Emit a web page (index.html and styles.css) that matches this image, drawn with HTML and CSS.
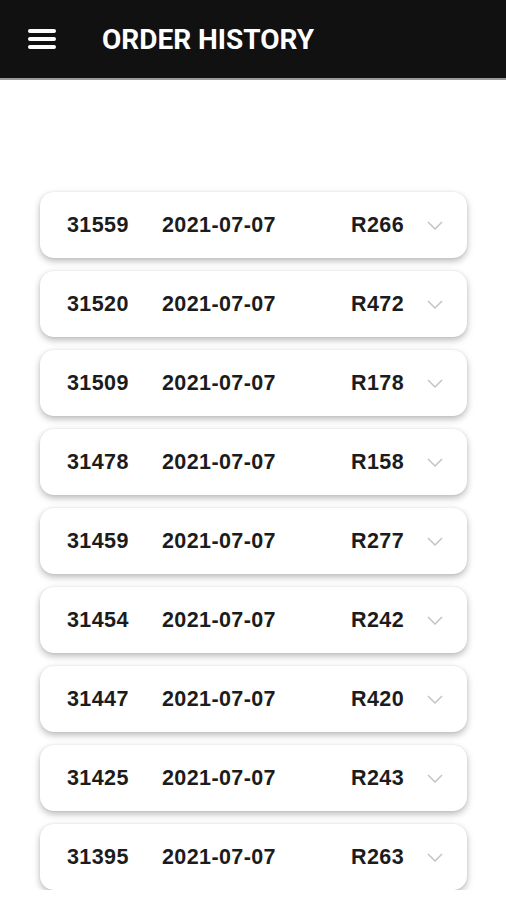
FILE: index.html
```html
<!DOCTYPE html>
<html lang="en">
<head>
<meta charset="utf-8">
<title>Order History</title>
<link rel="stylesheet" href="styles.css">
</head>
<body>
<header class="topbar">
  <svg class="menu-icon" width="28" height="22" viewBox="0 0 28 22" aria-hidden="true">
    <line x1="2" y1="3" x2="26" y2="3"/>
    <line x1="2" y1="11" x2="26" y2="11"/>
    <line x1="2" y1="19" x2="26" y2="19"/>
  </svg>
  <h1 class="title">ORDER HISTORY</h1>
</header>
<main class="orders">
  <div class="order"><span class="num">31559</span><span class="date">2021-07-07</span><span class="price">R266</span><svg class="chev" width="16" height="9" viewBox="0 0 16 9"><polyline points="1,1 8,8 15,1"/></svg></div>
  <div class="order"><span class="num">31520</span><span class="date">2021-07-07</span><span class="price">R472</span><svg class="chev" width="16" height="9" viewBox="0 0 16 9"><polyline points="1,1 8,8 15,1"/></svg></div>
  <div class="order"><span class="num">31509</span><span class="date">2021-07-07</span><span class="price">R178</span><svg class="chev" width="16" height="9" viewBox="0 0 16 9"><polyline points="1,1 8,8 15,1"/></svg></div>
  <div class="order"><span class="num">31478</span><span class="date">2021-07-07</span><span class="price">R158</span><svg class="chev" width="16" height="9" viewBox="0 0 16 9"><polyline points="1,1 8,8 15,1"/></svg></div>
  <div class="order"><span class="num">31459</span><span class="date">2021-07-07</span><span class="price">R277</span><svg class="chev" width="16" height="9" viewBox="0 0 16 9"><polyline points="1,1 8,8 15,1"/></svg></div>
  <div class="order"><span class="num">31454</span><span class="date">2021-07-07</span><span class="price">R242</span><svg class="chev" width="16" height="9" viewBox="0 0 16 9"><polyline points="1,1 8,8 15,1"/></svg></div>
  <div class="order"><span class="num">31447</span><span class="date">2021-07-07</span><span class="price">R420</span><svg class="chev" width="16" height="9" viewBox="0 0 16 9"><polyline points="1,1 8,8 15,1"/></svg></div>
  <div class="order"><span class="num">31425</span><span class="date">2021-07-07</span><span class="price">R243</span><svg class="chev" width="16" height="9" viewBox="0 0 16 9"><polyline points="1,1 8,8 15,1"/></svg></div>
  <div class="order"><span class="num">31395</span><span class="date">2021-07-07</span><span class="price">R263</span><svg class="chev" width="16" height="9" viewBox="0 0 16 9"><polyline points="1,1 8,8 15,1"/></svg></div>
</main>
</body>
</html>
```
FILE: styles.css
```css
html, body {
  margin: 0;
  padding: 0;
  background: #ffffff;
}
body {
  font-family: Roboto, "Liberation Sans", Arial, sans-serif;
  overflow: hidden;
}
.topbar {
  height: 78px;
  background: #111111;
  border-bottom: 2px solid #9a9a9a;
  display: flex;
  align-items: center;
  padding-left: 28px;
  gap: 46px;
  box-sizing: content-box;
}
.menu-icon line {
  stroke: #ffffff;
  stroke-width: 4;
  stroke-linecap: round;
}
.title {
  margin: 0;
  color: #ffffff;
  font-size: 28px;
  font-weight: 700;
  letter-spacing: 0;
  margin-top: 1px;
}
.orders {
  display: flex;
  flex-direction: column;
  gap: 13px;
  padding: 112px 39px 0 40px;
}
.order {
  height: 66px;
  background: #ffffff;
  border-radius: 14px;
  box-shadow: 0 3px 7px rgba(0, 0, 0, 0.28), 0 0 2px rgba(0, 0, 0, 0.08);
  display: grid;
  grid-template-columns: 95px 189px 76px 16px;
  align-items: center;
  padding-left: 27px;
  font-family: "Liberation Sans", Arial, sans-serif;
  font-size: 21.5px;
  font-weight: 700;
  letter-spacing: 0.4px;
  color: #1c1c1c;
}
.chev polyline {
  fill: none;
  stroke: #c4c4c4;
  stroke-width: 1.5;
}
```
